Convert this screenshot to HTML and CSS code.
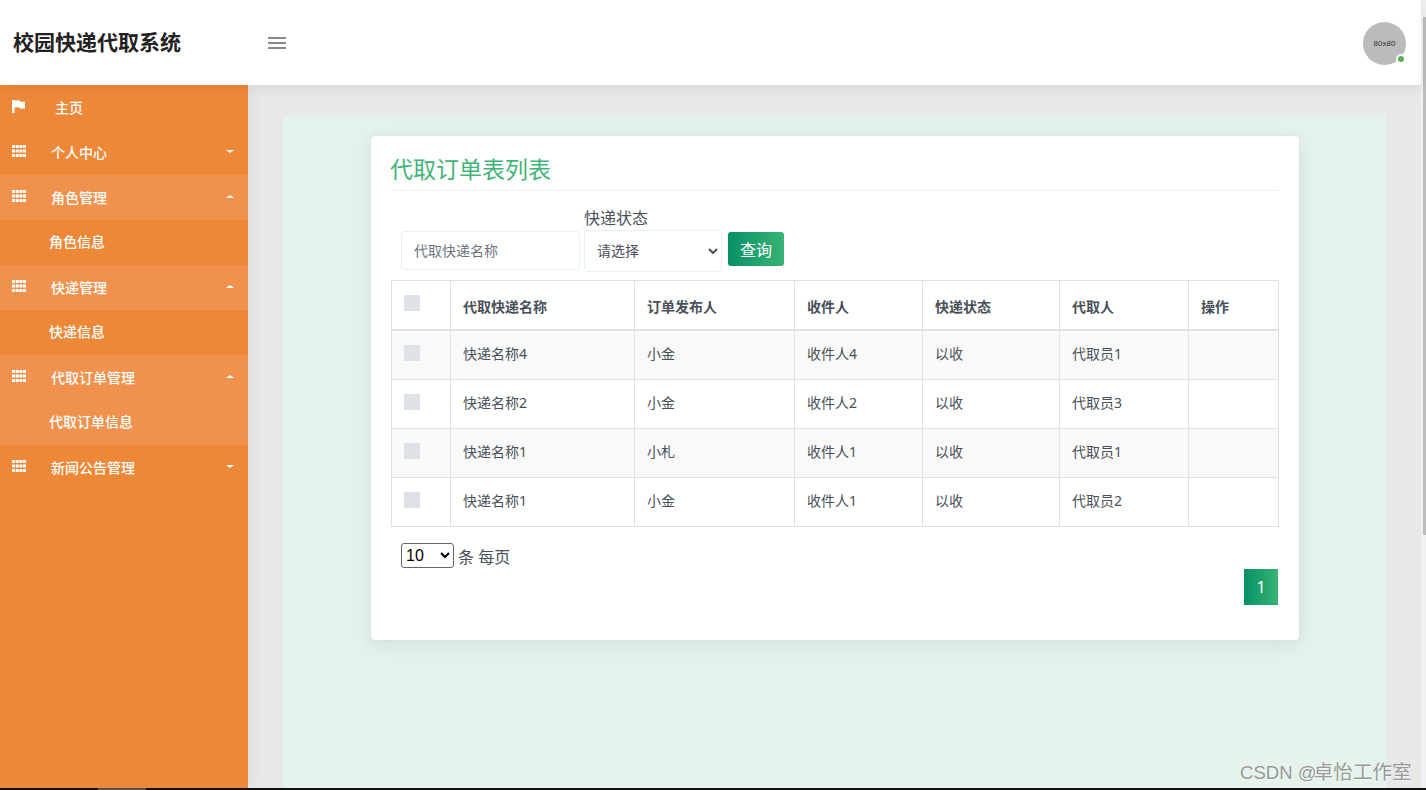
FILE: index.html
```html
<!DOCTYPE html>
<html lang="zh-CN">
<head>
<meta charset="utf-8">
<title>校园快递代取系统</title>
<link rel="stylesheet" href="styles.css">
</head>
<body>
<div class="screen">
  <div class="window">
    <div class="app">
      <header class="topbar">
        <h1 class="brand">校园快递代取系统</h1>
        <svg class="burger" width="18" height="12" viewBox="0 0 18 12"><rect width="18" height="2" y="0"/><rect width="18" height="2" y="5"/><rect width="18" height="2" y="10"/></svg>
        <div class="avatar"><span class="avatar-text">80x80</span><span class="avatar-dot"></span></div>
      </header>
      <div class="workspace">
        <nav class="sidebar">
          <a class="nav-row nav-home">
            <svg class="nav-icon" width="14" height="14" viewBox="0 0 14 14"><path d="M0 0h2.6v13H0zM2.6 .5h5l1 1.2H13v6.8H8l-1-1.2H2.6z"/></svg>
            <span class="nav-label">主页</span>
          </a>
          <a class="nav-row">
            <svg class="nav-icon" width="14" height="12" viewBox="0 0 14 12"><path d="M0 0h3v3H0zM3.7 0h3v3h-3zM7.4 0h3v3h-3zM11 0h3v3h-3zM0 4.5h3v3H0zM3.7 4.5h3v3h-3zM7.4 4.5h3v3h-3zM11 4.5h3v3h-3zM0 9h3v3H0zM3.7 9h3v3h-3zM7.4 9h3v3h-3zM11 9h3v3h-3z"/></svg>
            <span class="nav-label">个人中心</span><i class="caret caret-down"></i>
          </a>
          <a class="nav-row nav-open">
            <svg class="nav-icon" width="14" height="12" viewBox="0 0 14 12"><path d="M0 0h3v3H0zM3.7 0h3v3h-3zM7.4 0h3v3h-3zM11 0h3v3h-3zM0 4.5h3v3H0zM3.7 4.5h3v3h-3zM7.4 4.5h3v3h-3zM11 4.5h3v3h-3zM0 9h3v3H0zM3.7 9h3v3h-3zM7.4 9h3v3h-3zM11 9h3v3h-3z"/></svg>
            <span class="nav-label">角色管理</span><i class="caret caret-up"></i>
          </a>
          <a class="nav-row nav-sub"><span class="nav-label">角色信息</span></a>
          <a class="nav-row nav-open">
            <svg class="nav-icon" width="14" height="12" viewBox="0 0 14 12"><path d="M0 0h3v3H0zM3.7 0h3v3h-3zM7.4 0h3v3h-3zM11 0h3v3h-3zM0 4.5h3v3H0zM3.7 4.5h3v3h-3zM7.4 4.5h3v3h-3zM11 4.5h3v3h-3zM0 9h3v3H0zM3.7 9h3v3h-3zM7.4 9h3v3h-3zM11 9h3v3h-3z"/></svg>
            <span class="nav-label">快递管理</span><i class="caret caret-up"></i>
          </a>
          <a class="nav-row nav-sub"><span class="nav-label">快递信息</span></a>
          <a class="nav-row nav-open">
            <svg class="nav-icon" width="14" height="12" viewBox="0 0 14 12"><path d="M0 0h3v3H0zM3.7 0h3v3h-3zM7.4 0h3v3h-3zM11 0h3v3h-3zM0 4.5h3v3H0zM3.7 4.5h3v3h-3zM7.4 4.5h3v3h-3zM11 4.5h3v3h-3zM0 9h3v3H0zM3.7 9h3v3h-3zM7.4 9h3v3h-3zM11 9h3v3h-3z"/></svg>
            <span class="nav-label">代取订单管理</span><i class="caret caret-up"></i>
          </a>
          <a class="nav-row nav-sub nav-open"><span class="nav-label">代取订单信息</span></a>
          <a class="nav-row">
            <svg class="nav-icon" width="14" height="12" viewBox="0 0 14 12"><path d="M0 0h3v3H0zM3.7 0h3v3h-3zM7.4 0h3v3h-3zM11 0h3v3h-3zM0 4.5h3v3H0zM3.7 4.5h3v3h-3zM7.4 4.5h3v3h-3zM11 4.5h3v3h-3zM0 9h3v3H0zM3.7 9h3v3h-3zM7.4 9h3v3h-3zM11 9h3v3h-3z"/></svg>
            <span class="nav-label">新闻公告管理</span><i class="caret caret-down"></i>
          </a>
        </nav>
        <main class="main">
          <div class="panel">
            <section class="card">
              <h2 class="card-title">代取订单表列表</h2>
              <form class="search">
                <input class="field field-name" type="text" placeholder="代取快递名称">
                <div class="field-group">
                  <label class="field-label">快递状态</label>
                  <select class="field field-select"><option>请选择</option></select>
                </div>
                <button class="btn-query" type="button">查询</button>
              </form>
              <table class="grid">
                <colgroup>
                  <col class="c1"><col class="c2"><col class="c3"><col class="c4"><col class="c5"><col class="c6"><col class="c7">
                </colgroup>
                <thead>
                  <tr><th class="check-cell"><span class="check"></span></th><th>代取快递名称</th><th>订单发布人</th><th>收件人</th><th>快递状态</th><th>代取人</th><th>操作</th></tr>
                </thead>
                <tbody>
                  <tr class="odd first"><td class="check-cell"><span class="check"></span></td><td>快递名称4</td><td>小金</td><td>收件人4</td><td>以收</td><td>代取员1</td><td></td></tr>
                  <tr><td class="check-cell"><span class="check"></span></td><td>快递名称2</td><td>小金</td><td>收件人2</td><td>以收</td><td>代取员3</td><td></td></tr>
                  <tr class="odd"><td class="check-cell"><span class="check"></span></td><td>快递名称1</td><td>小札</td><td>收件人1</td><td>以收</td><td>代取员1</td><td></td></tr>
                  <tr><td class="check-cell"><span class="check"></span></td><td>快递名称1</td><td>小金</td><td>收件人1</td><td>以收</td><td>代取员2</td><td></td></tr>
                </tbody>
              </table>
              <div class="page-size">
                <select class="size-select"><option>10</option></select>
                <span class="size-text">条 每页</span>
              </div>
              <div class="pager"><span class="page-btn">1</span></div>
            </section>
          </div>
        </main>
      </div>
    </div>
    <div class="scrollbar"><div class="thumb"></div></div>
  </div>
  <div class="strip"><div class="strip-mark"></div></div>
</div>
<div class="watermark">CSDN @<span class="watermark-cjk">卓怡工作室</span></div>
</body>
</html>
```

FILE: styles.css
```css
* { box-sizing: border-box; }
html, body { margin: 0; height: 100%; overflow: hidden; }
body {
  font-family: "Noto Sans", "Noto Sans CJK SC", sans-serif;
  font-size: 14px;
  color: #495057;
  position: relative;
}
.screen { display: flex; flex-direction: column; width: 1426px; height: 790px; }
.window { display: flex; flex: 1; min-height: 0; }
.app { flex: 1; display: flex; flex-direction: column; min-width: 0; }

.scrollbar { width: 5px; background: #f1f1f1; padding: 17px 0 0 2px; }
.thumb { height: 518px; background: #bdbdbd; }
.strip { height: 2px; background: #111; padding-left: 98px; }
.strip-mark { width: 48px; height: 2px; background: #555; }

.topbar {
  height: 85px;
  flex: none;
  background: #fff;
  display: flex;
  align-items: center;
  padding: 0 15px 0 13px;
  position: relative;
  z-index: 2;
  box-shadow: 0 2px 14px rgba(0, 0, 0, .08);
}
.brand { margin: 0 0 2px; width: 255px; font-size: 21px; line-height: 28px; font-weight: 700; color: #222; }
.burger { fill: #888; }
.avatar {
  margin: 1px 0 0 auto;
  width: 43px;
  height: 43px;
  border-radius: 50%;
  background: #bbb;
  display: flex;
  align-items: center;
  justify-content: center;
  position: relative;
}
.avatar-text { font-size: 8px; color: #333; font-family: "Liberation Sans", sans-serif; }
.avatar-dot {
  position: absolute;
  right: 0;
  bottom: 1px;
  width: 10px;
  height: 10px;
  border-radius: 50%;
  background: #5cad5c;
  border: 2px solid #fff;
}

.workspace { flex: 1; display: flex; min-height: 0; }
.sidebar {
  width: 248px;
  flex: none;
  background: #ee8839;
  position: relative;
  z-index: 1;
  box-shadow: 2px 0 14px rgba(0, 0, 0, .06);
}
.nav-row {
  height: 45px;
  display: flex;
  align-items: center;
  padding: 0 14px 2px 12px;
  color: #fff;
  font-size: 14px;
  font-weight: 500;
}
.nav-open { background: #f0924d; }
.nav-icon { fill: #fff; flex: none; margin-top: -1px; margin-right: 25px; }
.nav-home .nav-icon { margin-right: 29px; margin-top: 1px; }
.nav-sub { padding-left: 49px; padding-bottom: 4px; }
.caret { margin-left: auto; width: 0; height: 0; border-left: 4px solid transparent; border-right: 4px solid transparent; }
.caret-down { border-top: 3px solid #fff; }
.caret-up { border-bottom: 3px solid #fff; }

.main { flex: 1; min-width: 0; background: #e8e8e8; padding: 30px 35px 0; }
.panel { height: 100%; background: #e5f3ec; padding: 21px 87px 0 88px; }
.card {
  height: 504px;
  background: #fff;
  border-radius: 3px;
  padding: 0 20px;
  box-shadow: 0 0 1px rgba(120, 140, 170, .5), 0 4px 20px rgba(120, 140, 170, .18);
}
.card-title {
  margin: 0;
  height: 55px;
  padding-top: 16px;
  font-size: 23px;
  line-height: 34px;
  font-weight: 400;
  color: #3fb477;
  text-indent: -1px;
  border-bottom: 1px solid #eef0f2;
}

.search { display: flex; align-items: flex-end; height: 89px; padding: 0 0 8px 10px; }
.field { font: inherit; background: #fff; border: 1px solid #e5f3ec; border-radius: 3px; color: #495057; outline: none; }
.field-name { width: 179px; height: 39px; padding: 0 12px; margin: 0 4px 2px 0; }
.field-name::placeholder { color: #6c757d; opacity: 1; }
.field-group { display: flex; flex-direction: column; margin-right: 6px; }
.field-label { font-size: 16px; line-height: 22px; margin-bottom: 1px; }
.field-select { width: 138px; height: 42px; padding: 0 8px 2px; }
.btn-query {
  width: 56px;
  height: 34px;
  margin-bottom: 6px;
  border: 0;
  border-radius: 3px;
  color: #fff;
  font: inherit;
  font-size: 16px;
  background: linear-gradient(90deg, #079066, #38b474);
}

.grid { border-collapse: collapse; table-layout: fixed; width: 887px; }
.c1 { width: 59px; } .c2 { width: 184px; } .c3 { width: 160px; } .c4 { width: 128px; }
.c5 { width: 137px; } .c6 { width: 129px; } .c7 { width: 90px; }
.grid th, .grid td { border: 1px solid #dee2e6; padding: 0 12px; text-align: left; height: 49px; }
.grid th { font-weight: 700; border-bottom-width: 2px; height: 49px; padding-top: 2px; }
.grid td { padding-bottom: 4px; }
.grid .first td { height: 50px; }
.grid .check-cell { vertical-align: top; padding: 14px 12px 0; }
.odd td { background: #f9f9f9; }
.check { display: block; width: 16px; height: 16px; background: #dee2e6; }

.page-size { display: flex; align-items: center; margin: 16px 0 0 10px; height: 25px; }
.size-select { width: 53px; height: 25px; font: 16px "Liberation Sans", sans-serif; color: #000; background: #fff; border: 1px solid #666; border-radius: 3px; }
.size-text { font-size: 16px; margin-left: 4px; }
.pager { display: flex; justify-content: flex-end; margin-top: 1px; padding-right: 1px; }
.page-btn {
  width: 34px;
  height: 36px;
  display: flex;
  align-items: center;
  justify-content: center;
  color: #fff;
  font-size: 16px;
  background: linear-gradient(90deg, #079066, #38b474);
}

.watermark {
  position: absolute;
  left: 1240px;
  top: 759px;
  font-size: 18.6px;
  line-height: 26px;
  color: #999;
  white-space: nowrap;
  font-family: "Liberation Sans", "Noto Sans CJK SC", sans-serif;
  text-shadow: 1px 1px 1px rgba(255, 255, 255, .6);
}
.watermark-cjk { font-size: 19.6px; margin-left: -3px; }
```
